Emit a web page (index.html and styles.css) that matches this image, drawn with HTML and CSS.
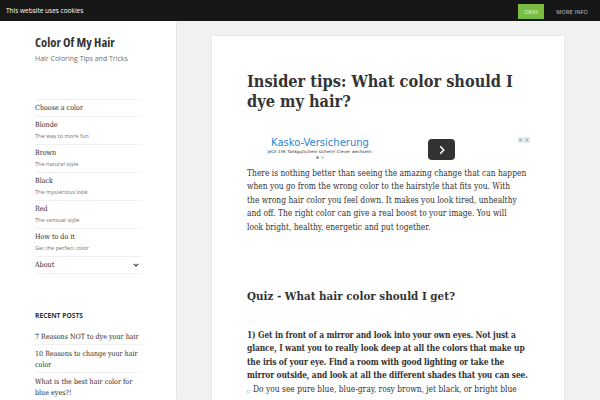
FILE: index.html
```html
<!DOCTYPE html>
<html>
<head>
<meta charset="utf-8">
<link rel="stylesheet" href="styles.css">
</head>
<body>
<div class="cookie">
  <span class="cookie-text">This website uses cookies</span>
  <div class="cookie-actions">
    <span class="ok">OKAY</span>
    <span class="more">MORE INFO</span>
  </div>
</div>
<div class="page">
  <aside class="sidebar">
    <div class="site-title">Color Of My Hair</div>
    <div class="site-desc">Hair Coloring Tips and Tricks</div>
    <ul class="nav">
      <li class="nav-item"><span class="nav-label">Choose a color</span></li>
      <li class="nav-item"><span class="nav-label">Blonde</span><span class="nav-desc">The way to more fun</span></li>
      <li class="nav-item"><span class="nav-label">Brown</span><span class="nav-desc">The natural style</span></li>
      <li class="nav-item"><span class="nav-label">Black</span><span class="nav-desc">The mysterious look</span></li>
      <li class="nav-item"><span class="nav-label">Red</span><span class="nav-desc">The sensual style</span></li>
      <li class="nav-item"><span class="nav-label">How to do it</span><span class="nav-desc">Get the perfect color</span></li>
      <li class="nav-item nav-about"><span class="nav-label">About</span>
        <svg class="chev" width="6" height="4" viewBox="0 0 6 4"><path d="M0.8 0.8 L3 3 L5.2 0.8" fill="none" stroke="#333" stroke-width="1.1"/></svg>
      </li>
    </ul>
    <div class="widget-title">RECENT POSTS</div>
    <ul class="posts">
      <li>7 Reasons NOT to dye your hair</li>
      <li>10 Reasons to change your hair color</li>
      <li>What is the best hair color for blue eyes?!</li>
    </ul>
  </aside>
  <main class="main">
    <article class="card">
      <h1 class="entry-title">Insider tips: What color should I dye my hair?</h1>
      <div class="ad">
        <div class="ad-text">
          <div class="ad-head">Kasko-Versicherung</div>
          <div class="ad-sub">Jetzt 15€ Tankgutschein sichern! Clever wechseln:</div>
          <div class="ad-dots"><span class="dot"></span><span class="dot dot-empty"></span></div>
        </div>
        <div class="ad-btn">
          <svg width="8" height="10" viewBox="0 0 8 10"><path d="M2.2 1.2 L5.8 5 L2.2 8.8" fill="none" stroke="#fff" stroke-width="1.5"/></svg>
        </div>
        <div class="ad-mark">
          <svg width="12" height="6" viewBox="0 0 12 6"><rect x="0" y="0" width="12" height="6" fill="#e6eef0"/><path d="M1.5 1 L4.5 3 L1.5 5 Z" fill="#8fb8c0"/><path d="M7.5 1.2 L10.5 4.8 M10.5 1.2 L7.5 4.8" stroke="#8fb8c0" stroke-width="0.9"/></svg>
        </div>
      </div>
      <p class="para">There is nothing better than seeing the amazing change that can happen when you go from the wrong color to the hairstyle that fits you. With<br>the wrong hair color you feel down. It makes you look tired, unhealthy and off. The right color can give a real boost to your image. You will<br>look bright, healthy, energetic and put together.</p>
      <h2 class="quiz">Quiz - What hair color should I get?</h2>
      <p class="para bold">1) Get in front of a mirror and look into your own eyes. Not just a glance, I want you to really look deep at all the colors that make up the iris of your eye. Find a room with good lighting or take the mirror outside, and look at all the different shades that you can see.</p>
      <p class="para"><span class="mark">c</span>Do you see pure blue, blue-gray, rosy brown, jet black, or bright blue</p>
    </article>
  </main>
</div>
</body>
</html>
```
FILE: styles.css
```css
* { box-sizing: border-box; }
html, body { margin: 0; padding: 0; }
body {
  width: 600px;
  height: 400px;
  overflow: hidden;
  background: #f1f1f1;
  font-family: "DejaVu Serif", serif;
  font-stretch: condensed;
  color: #333;
}
.cookie {
  height: 21px;
  background: #171717;
  display: flex;
  align-items: center;
  justify-content: space-between;
  padding: 0 12px 0 6px;
  font-family: "Open Sans", sans-serif;
  font-stretch: normal;
  color: #fff;
}
.cookie-text { font-size: 6.5px; }
.cookie-actions { display: flex; align-items: center; gap: 12px; padding-top: 2px; }
.ok {
  background: #79bd42;
  color: #e8f5d8;
  font-size: 5.5px;
  height: 15px;
  width: 26px;
  display: flex;
  align-items: center;
  justify-content: center;
}
.more { font-size: 5.5px; color: #ccc; letter-spacing: 0.2px; }
.page { display: flex; height: 379px; }
.sidebar {
  width: 176px;
  background: #fff;
  padding: 15px 34px 0 35px;
  box-shadow: 0 0 2px rgba(0,0,0,0.12);
  flex: none;
}
.site-title {
  font-family: "Open Sans", sans-serif;
  font-stretch: 82%;
  font-weight: 700;
  font-size: 12.6px;
  color: #333;
  line-height: 14px;
}
.site-desc {
  font-family: "Open Sans", sans-serif;
  font-stretch: normal;
  font-size: 7px;
  color: #707070;
  margin-top: 4px;
  line-height: 10px;
}
.nav { list-style: none; margin: 35px 0 0; padding: 0; border-top: 1px solid #f0f0f0; }
.nav-item {
  border-bottom: 1px solid #f0f0f0;
  padding: 3px 0 3px;
  display: flex;
  flex-direction: column;
}
.nav-label { font-size: 7.1px; color: #2b2b2b; line-height: 10px; }
.nav-desc { font-family: "Open Sans", sans-serif; font-stretch: normal; font-size: 5.6px; color: #707070; line-height: 11px; margin-top: 1px; margin-bottom: -1px; }
.nav-about { flex-direction: row; justify-content: space-between; align-items: center; }
.chev { margin-right: 3px; }
.widget-title {
  font-family: "Open Sans", sans-serif;
  font-stretch: normal;
  font-weight: 700;
  font-size: 6.7px;
  line-height: 9px;
  color: #333;
  margin-top: 37px;
}
.posts { list-style: none; margin: 8px 0 0; padding: 0; }
.posts li {
  font-size: 7.1px;
  line-height: 11px;
  color: #2b2b2b;
  padding: 3px 0 2px;
  border-bottom: 1px solid #f0f0f0;
}
.main { flex: 1; padding: 15px 0 0 36px; }
.card {
  width: 352px;
  height: 400px;
  background: #fff;
  box-shadow: 0 0 1px rgba(0,0,0,0.15);
  padding: 36px 35px 0 35px;
}
.entry-title {
  font-size: 16.2px;
  line-height: 20px;
  font-weight: 700;
  margin: 0 0 24px;
  color: #333;
}
.ad {
  height: 28px;
  display: flex;
  align-items: flex-start;
  position: relative;
  margin-bottom: 3px;
}
.ad-text { width: 146px; text-align: center; font-family: "DejaVu Sans", sans-serif; font-stretch: normal; }
.ad-head { font-size: 10px; color: #2a85d0; line-height: 12px; margin-top: 1px; }
.ad-sub { font-size: 4.2px; color: #333; line-height: 5px; }
.ad-dots { display: flex; gap: 2px; justify-content: center; margin-top: 2px; }
.dot { width: 3px; height: 3px; border-radius: 50%; background: #999; }
.dot-empty { background: #fff; border: 0.5px solid #bbb; }
.ad-btn {
  width: 27px; height: 21px; border-radius: 4px; background: #333;
  margin: 3px 0 0 35px;
  display: flex; align-items: center; justify-content: center;
}
.ad-mark { position: absolute; right: -1px; top: 1px; line-height: 0; }
.para { font-size: 8.4px; line-height: 13.4px; margin: 0; color: #333; }
.bold { font-weight: 700; letter-spacing: -0.12px; }
.mark { font-size: 6px; color: #999; margin-right: 3px; vertical-align: -1px; }
.quiz {
  font-size: 11.5px;
  font-weight: 700;
  line-height: 16px;
  margin: 54px 0 25px;
  color: #333;
}
```
